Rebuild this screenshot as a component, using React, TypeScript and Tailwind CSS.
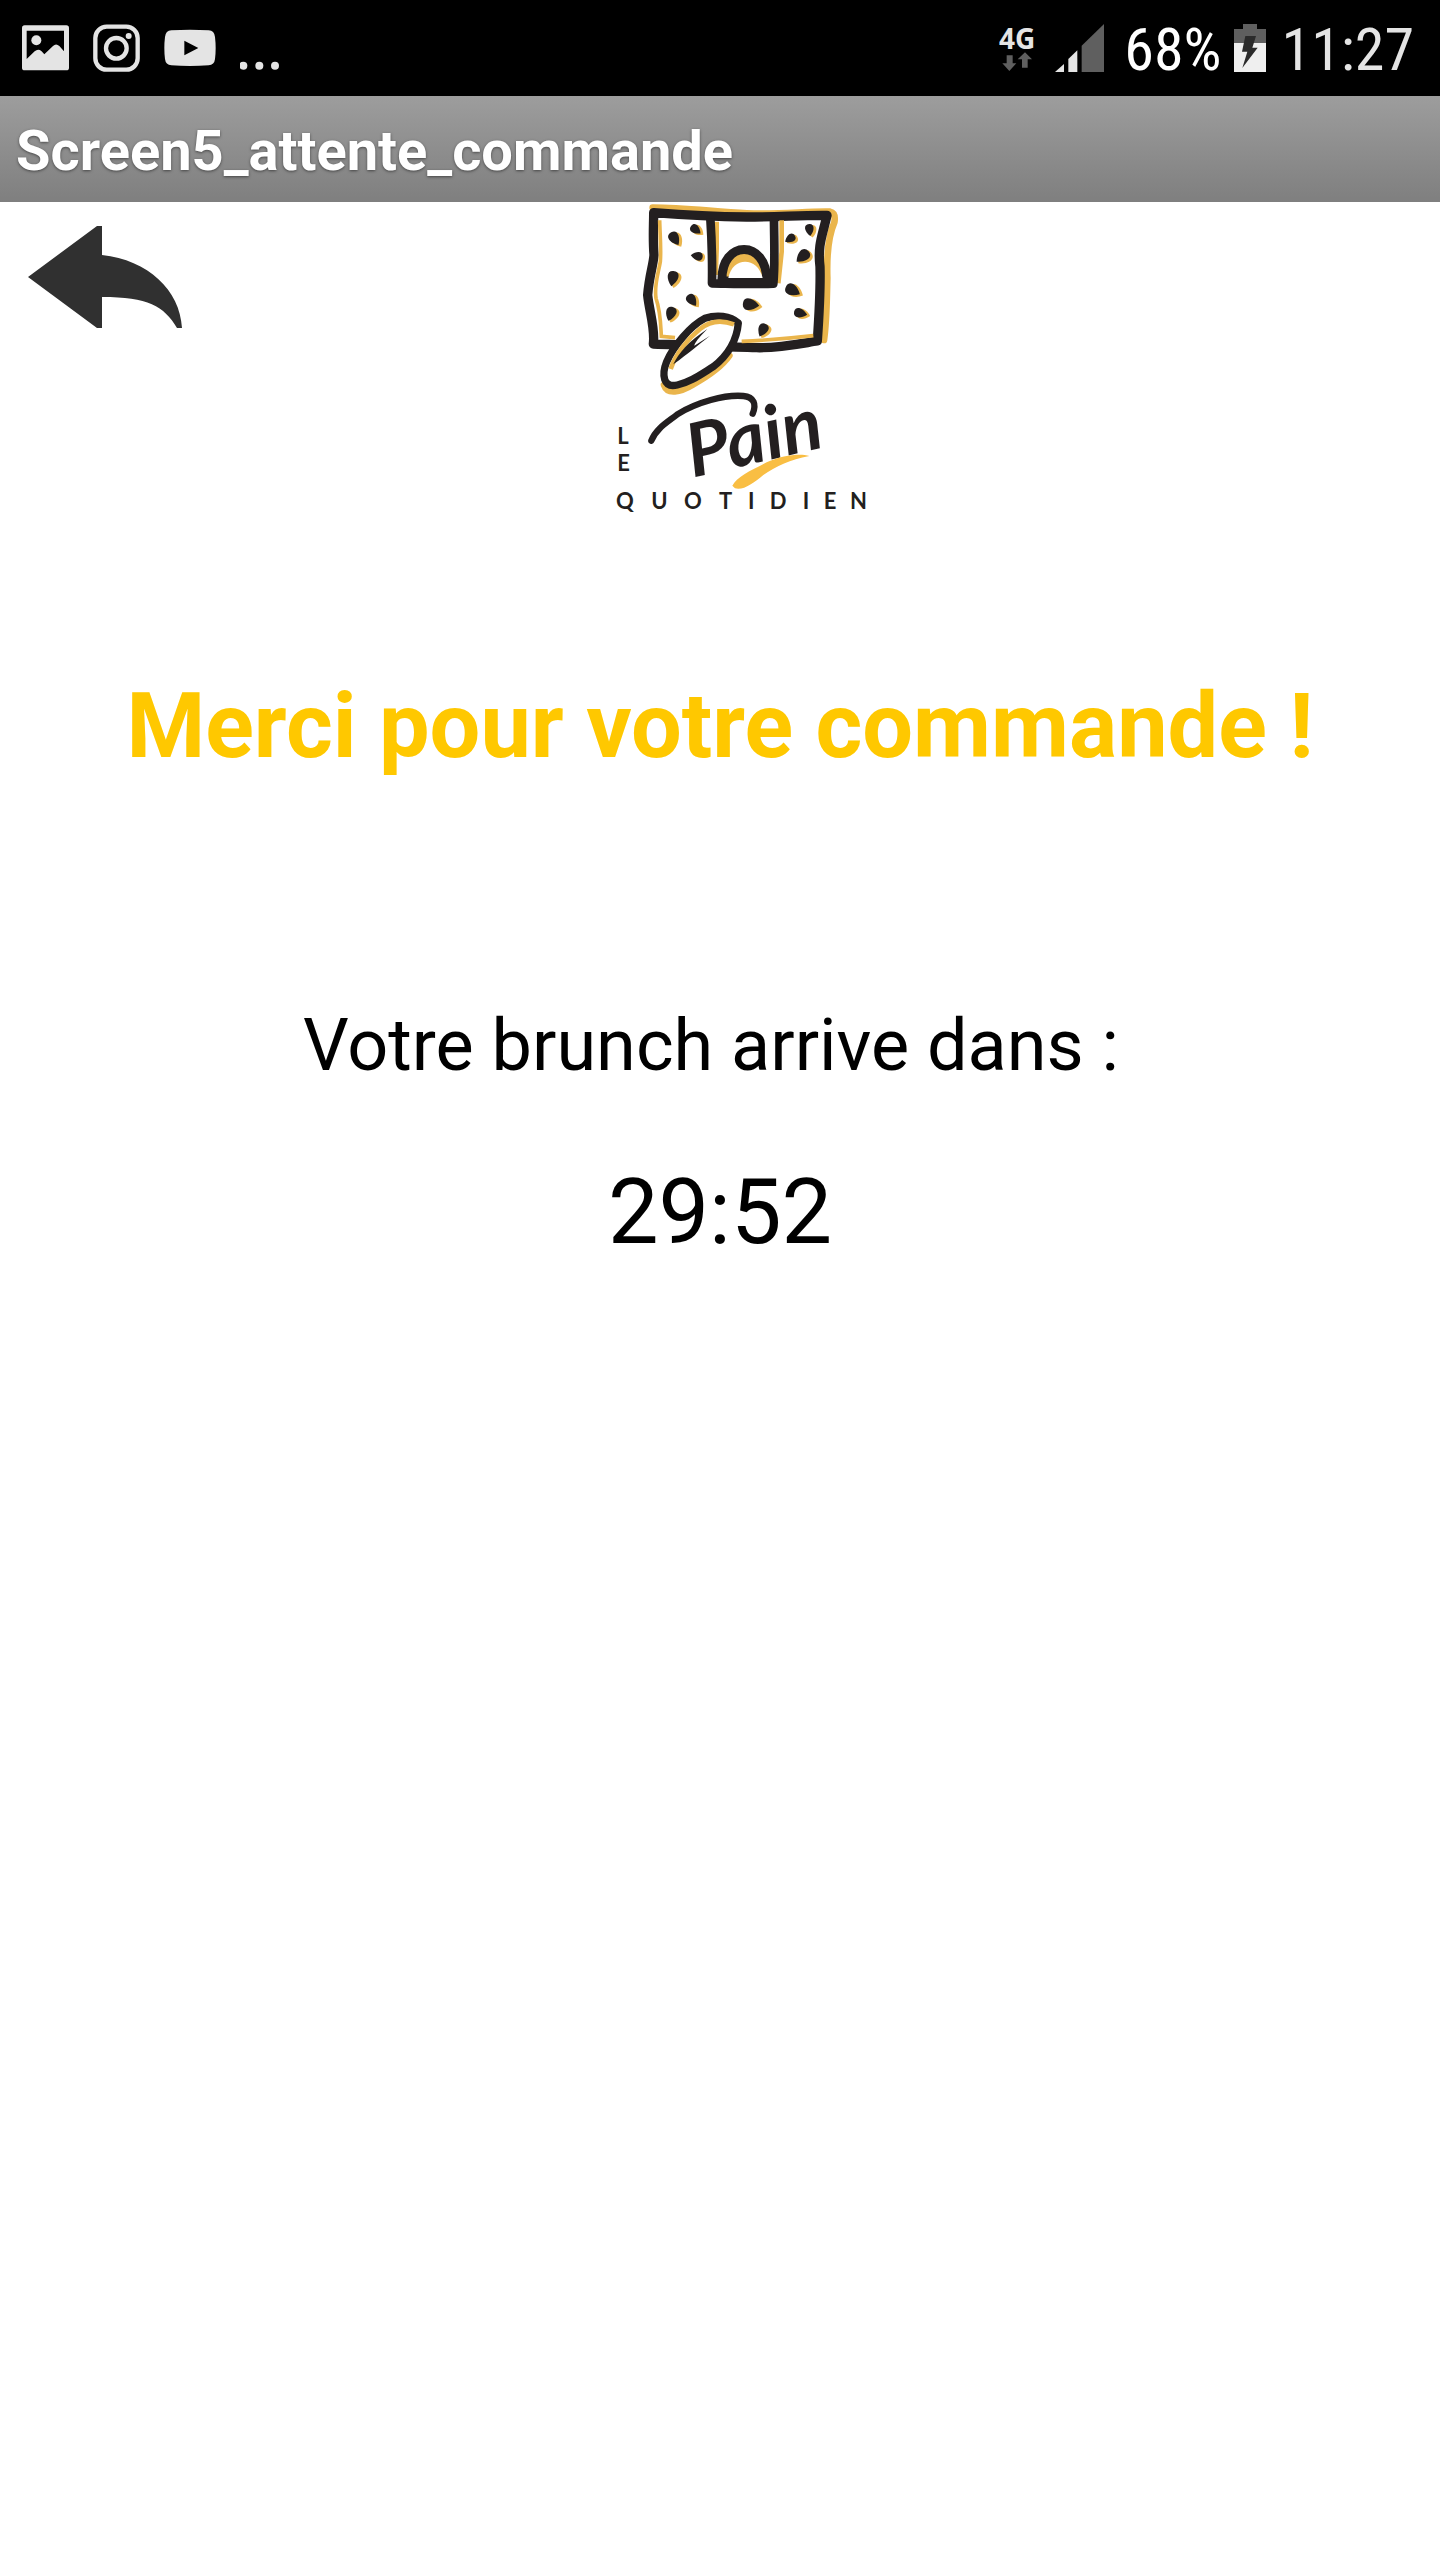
const seeds = [
  { x: 224, y: 130, r: -30, s: 23 },
  { x: 287, y: 103, r: -50, s: 19 },
  { x: 291, y: 184, r: 100, s: 19 },
  { x: 219, y: 250, r: 12, s: 24 },
  { x: 276, y: 315, r: -35, s: 21 },
  { x: 213, y: 356, r: 20, s: 23 },
  { x: 452, y: 328, r: -80, s: 26 },
  { x: 489, y: 405, r: 28, s: 22 },
  { x: 571, y: 131, r: 60, s: 18 },
  { x: 629, y: 104, r: -5, s: 19 },
  { x: 609, y: 184, r: 50, s: 25 },
  { x: 578, y: 285, r: -60, s: 25 },
  { x: 601, y: 354, r: -75, s: 21 },
];

function StatusBar() {
  return (
    <div className="flex h-24 items-center justify-between bg-black pr-[26px] pl-[22px] text-[#e4e4e4]">
      <div className="flex items-center gap-6">
        <svg width="47" height="46" viewBox="0 0 141 138" aria-label="Image">
          <path
            fill="#e4e4e4"
            fillRule="evenodd"
            d="M8 1H133Q141 1 141 9V128Q141 136 133 136H8Q0 136 0 128V9Q0 1 8 1ZM14 17V102L38 79Q48 70 58 78L67 88L93 63Q102 54 112 63L126 79V17Z"
          />
          <circle cx="43" cy="46" r="15" fill="#e4e4e4" />
        </svg>
        <svg width="47" height="48" viewBox="0 0 141 144" fill="none" stroke="#e4e4e4" strokeWidth="13" aria-label="Instagram">
          <rect x="7" y="8" width="127" height="129" rx="34" />
          <circle cx="70" cy="73" r="31" />
          <circle cx="107" cy="36" r="9" fill="#e4e4e4" stroke="none" />
        </svg>
        <svg width="52" height="38" viewBox="0 0 156 114" aria-label="YouTube">
          <path
            fill="#e4e4e4"
            fillRule="evenodd"
            d="M22 4Q78 0 134 4Q151 5 153 24Q157 57 153 90Q151 108 134 109Q78 113 22 109Q5 108 3 90Q-1 57 3 24Q5 5 22 4ZM61 35V79L103 57Z"
          />
        </svg>
        <svg width="41" height="46" viewBox="0 0 123 138" fill="#e4e4e4" aria-label="Plus">
          <circle cx="10" cy="122" r="12" />
          <circle cx="58" cy="122" r="12" />
          <circle cx="105" cy="122" r="12" />
        </svg>
      </div>

      <div className="flex items-center">
        <div className="mr-5 flex flex-col items-center">
          <span className="font-['Open_Sans',sans-serif] text-[28px] leading-7 font-bold">4G</span>
          <svg width="30" height="20" viewBox="0 0 90 60" fill="#5f5f5f">
            <path d="M14 10H32V34H43L22 57L1 34H14Z" />
            <path d="M60 47H77V22H90L69 1L47 22H60Z" />
          </svg>
        </div>
        <svg className="mr-5" width="49" height="48" viewBox="0 0 147 144">
          <path d="M0 144L27 120V144Z" fill="#e4e4e4" />
          <path d="M40 144V105L67 79V144Z" fill="#e4e4e4" />
          <path d="M80 144V65L147 0V144Z" fill="#5f5f5f" />
        </svg>
        <span className="mr-3 pt-1 font-['Roboto_Condensed',Roboto,sans-serif] text-[60px] leading-none text-white">68%</span>
        <svg className="mr-4" width="32" height="48" viewBox="0 0 96 144">
          <path d="M27 0H69V15H96V57H0V15H27Z" fill="#5f5f5f" />
          <path d="M0 57H96V144H0Z" fill="#efefef" />
          <path d="M34 36H66L55 71H71L25 132L40 83H24Z" fill="#2b2b2b" />
        </svg>
        <span className="pt-1 font-['Roboto_Condensed',Roboto,sans-serif] text-[60px] leading-none">11:27</span>
      </div>
    </div>
  );
}

function Logo() {
  return (
    <svg width="300" height="318" viewBox="-90 21 900 954" role="img" aria-label="Le Pain Quotidien">
      {/* Loaf */}
      <path
        d="M158 38C250 38 340 50 440 55C540 60 620 48 690 50Q708 54 703 82C682 130 680 190 682 250C680 320 680 380 672 435"
        fill="none"
        stroke="#eab54c"
        strokeWidth="20"
        strokeLinecap="round"
      />
      <path
        d="M161 53C250 60 330 65 440 66C540 66 600 60 681 61C668 120 652 150 660 215C662 290 658 350 652 438C600 446 530 460 470 458C380 456 270 450 160 447C166 400 148 350 143 300C148 240 160 210 162 180C158 130 161 90 161 53Z"
        fill="#fff"
        stroke="#231f20"
        strokeWidth="28"
        strokeLinejoin="round"
      />
      <path
        d="M179 76C180 120 184 160 181 200C174 240 162 270 168 310C182 350 182 390 184 424L225 428M425 439C500 436 570 430 640 422"
        fill="none"
        stroke="#eab54c"
        strokeWidth="11"
      />

      {/* Label */}
      <path d="M350 80V160L347 240M545 76V170L535 265" fill="none" stroke="#eab54c" strokeWidth="14" />
      <path d="M331 70C335 130 337 200 336 265C400 266 460 268 520 266C526 200 522 130 522 72" fill="none" stroke="#231f20" strokeWidth="26" strokeLinejoin="round" />
      <path d="M366 258C362 132 502 132 500 258Z" fill="#eab54c" stroke="#231f20" strokeWidth="27" />
      <path d="M385 249C397 184 473 184 488 249Z" fill="#fff" />

      {seeds.map((seed) => (
        <g key={`${seed.x}-${seed.y}`}>
          <path
            transform={`translate(${seed.x + 7} ${seed.y + 3}) rotate(${seed.r}) scale(${seed.s})`}
            d="M0 1.1C-1 0.3 -1 -0.9 0 -0.9C1 -0.9 0.9 0.3 0 1.1Z"
            fill="#eab54c"
          />
          <path
            transform={`translate(${seed.x} ${seed.y}) rotate(${seed.r}) scale(${seed.s})`}
            d="M0 1C-0.9 0.2 -1 -0.9 0 -0.9C0.9 -0.9 0.8 0.2 0 1Z"
            fill="#231f20"
          />
        </g>
      ))}

      {/* Roll */}
      <path d="M192 570C202 600 240 592 280 568C330 540 365 515 388 482" fill="none" stroke="#eab54c" strokeWidth="20" strokeLinecap="round" />
      <path
        d="M415 384C390 362 350 358 315 370C270 393 220 455 200 500C184 540 190 580 232 570C270 562 300 540 340 515C385 480 410 440 415 384Z"
        fill="#fff"
        stroke="#231f20"
        strokeWidth="22"
        strokeLinejoin="round"
      />
      <path d="M402 388C365 374 330 377 300 402C265 430 228 475 212 522" fill="none" stroke="#eab54c" strokeWidth="14" />
      <path d="M220 508C235 475 265 440 322 402C295 430 285 442 283 452L330 422C295 450 265 475 220 508Z" fill="#231f20" />

      {/* Lettering */}
      <path
        d="M154 737C168 700 205 680 232 658C290 622 375 598 430 603C462 606 470 628 458 656"
        fill="none"
        stroke="#231f20"
        strokeWidth="19"
        strokeLinecap="round"
      />
      <text
        x="278"
        y="848"
        transform="rotate(-13 278 848)"
        fontFamily="Lato, sans-serif"
        fontStyle="italic"
        fontWeight="700"
        fontSize="222"
        fill="#231f20"
      >
        Pain
      </text>
      <path d="M397 872C410 845 455 825 500 802C550 780 600 775 628 783C570 795 530 812 490 840C460 865 430 887 405 880Z" fill="#f9be43" />

      <g fontFamily="Lato, sans-serif" fontWeight="700" fontSize="66" fill="#231f20">
        <text x="52" y="747">L</text>
        <text x="52" y="829">E</text>
        <text x="48 154 252 357 444 509 608 671 750" y="943">QUOTIDIEN</text>
      </g>
    </svg>
  );
}

export default function App() {
  return (
    <div className="min-h-screen bg-white font-[Roboto,sans-serif] text-black">
      <StatusBar />
      <div className="flex h-[106px] items-center bg-linear-to-b from-[#9d9d9d] to-[#7f7f7f] px-4 pt-1">
        <h1 className="text-[56px] leading-none font-bold text-white text-shadow-[0_1px_3px_#00000080]">Screen5_attente_commande</h1>
      </div>

      <header className="grid grid-cols-[1fr_auto_1fr] items-start">
        <button type="button" aria-label="Retour" className="mt-6 ml-7 justify-self-start">
          <svg width="154" height="102" viewBox="28 226 154 102" fill="#303030">
            <path d="M28 277L97 226H102V255C148 260 180 290 182 328H177C164 306 148 297 102 297V328H97Z" />
          </svg>
        </button>
        <Logo />
      </header>

      <main className="flex flex-col items-center text-center">
        <h2 className="mt-[154px] text-[90px] leading-[106px] font-bold text-[#ffc800]">Merci pour votre commande !</h2>
        <p className="mt-[224px] pr-[18px] text-[72px] leading-[84px]">Votre brunch arrive dans :</p>
        <p className="mt-[72px] text-[90px] leading-[106px]" role="timer">29:52</p>
      </main>
    </div>
  );
}
